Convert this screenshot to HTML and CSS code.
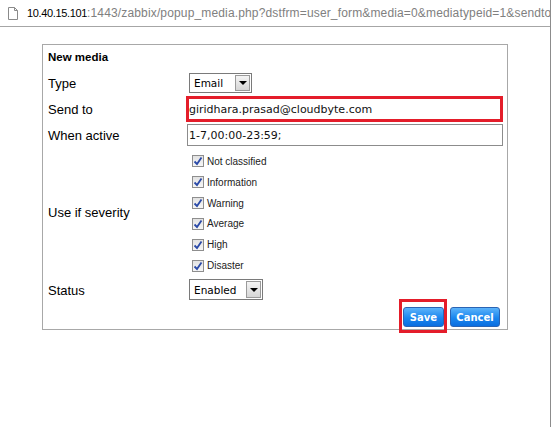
FILE: index.html
```html
<!DOCTYPE html>
<html>
<head>
<meta charset="utf-8">
<title>popup_media</title>
<link rel="stylesheet" href="styles.css">
</head>
<body>
<div class="window">
  <div class="addressbar">
    <svg class="page-icon" width="10" height="13" viewBox="0 0 10 13"><path d="M0.5 0.5 H6.5 L9.5 3.5 V12.5 H0.5 Z" fill="#fff" stroke="#8a8a8a"/><path d="M6.5 0.5 V3.5 H9.5" fill="none" stroke="#8a8a8a"/></svg>
    <span class="url"><span class="host">10.40.15.101</span><span class="path">:1443/zabbix/popup_media.php?dstfrm=user_form&amp;media=0&amp;mediatypeid=1&amp;sendto</span></span>
  </div>
  <div class="page">
    <div class="media-box">
      <div class="title">New media</div>
      <div class="form">
        <div class="label">Type</div>
        <div class="ctl">
          <div class="select select-type"><span class="sel-text">Email</span><span class="arrow"><span class="tri"></span></span></div>
        </div>

        <div class="label">Send to</div>
        <div class="ctl">
          <div class="input input-sendto">giridhara.prasad@cloudbyte.com</div>
        </div>

        <div class="label">When active</div>
        <div class="ctl">
          <div class="input input-period">1-7,00:00-23:59;</div>
        </div>

        <div class="label">Use if severity</div>
        <div class="ctl severities">
          <div class="sev"><span class="check"><svg width="10" height="10" viewBox="0 0 10 10"><path d="M1.5 5.5 L4 8 L8.5 1.5" fill="none" stroke="#2b4aa8" stroke-width="1.8"/></svg></span><span class="sev-label">Not classified</span></div>
          <div class="sev"><span class="check"><svg width="10" height="10" viewBox="0 0 10 10"><path d="M1.5 5.5 L4 8 L8.5 1.5" fill="none" stroke="#2b4aa8" stroke-width="1.8"/></svg></span><span class="sev-label">Information</span></div>
          <div class="sev"><span class="check"><svg width="10" height="10" viewBox="0 0 10 10"><path d="M1.5 5.5 L4 8 L8.5 1.5" fill="none" stroke="#2b4aa8" stroke-width="1.8"/></svg></span><span class="sev-label">Warning</span></div>
          <div class="sev"><span class="check"><svg width="10" height="10" viewBox="0 0 10 10"><path d="M1.5 5.5 L4 8 L8.5 1.5" fill="none" stroke="#2b4aa8" stroke-width="1.8"/></svg></span><span class="sev-label">Average</span></div>
          <div class="sev"><span class="check"><svg width="10" height="10" viewBox="0 0 10 10"><path d="M1.5 5.5 L4 8 L8.5 1.5" fill="none" stroke="#2b4aa8" stroke-width="1.8"/></svg></span><span class="sev-label">High</span></div>
          <div class="sev"><span class="check"><svg width="10" height="10" viewBox="0 0 10 10"><path d="M1.5 5.5 L4 8 L8.5 1.5" fill="none" stroke="#2b4aa8" stroke-width="1.8"/></svg></span><span class="sev-label">Disaster</span></div>
        </div>

        <div class="label">Status</div>
        <div class="ctl">
          <div class="select select-status"><span class="sel-text">Enabled</span><span class="arrow"><span class="tri"></span></span></div>
        </div>
      </div>
      <div class="buttons">
        <button class="btn btn-save" type="button">Save<span class="mark"></span></button>
        <button class="btn btn-cancel" type="button">Cancel</button>
      </div>
    </div>
  </div>
</div>
</body>
</html>
```

FILE: styles.css
```css
html, body {
  margin: 0;
  padding: 0;
  background: #fff;
}

body {
  font-family: "Liberation Sans", Arial, sans-serif;
  color: #000;
}

.window {
  width: 551px;
  height: 427px;
  box-sizing: border-box;
  border-right: 1px solid #8c8c8c;
  overflow: hidden;
}

.addressbar {
  height: 27px;
  box-sizing: border-box;
  border-bottom: 1px solid #a6a6a6;
  display: flex;
  align-items: center;
  padding-left: 8px;
  white-space: nowrap;
  overflow: hidden;
}

.page-icon {
  flex: none;
  margin-right: 9px;
  margin-top: 1px;
}

.url {
  font-size: 11px;
}

.host {
  color: #000;
  letter-spacing: -0.35px;
}

.path {
  color: #808080;
  font-size: 12px;
  letter-spacing: 0.15px;
}

.page {
  padding-top: 17px;
  padding-left: 42px;
}

.media-box {
  width: 466px;
  height: 286px;
  box-sizing: border-box;
  border: 1px solid #a8a8a8;
}

.title {
  height: 25px;
  line-height: 25px;
  padding-left: 5px;
  font-size: 11.5px;
  font-weight: bold;
}

.form {
  display: grid;
  grid-template-columns: 138px 1fr;
  grid-template-rows: 26px 26px 26px 128px 27px;
  padding-left: 5px;
}

.label {
  align-self: center;
  font-size: 13px;
  padding-top: 1px;
}

.ctl {
  display: flex;
  align-items: center;
}

.select {
  display: flex;
  align-items: stretch;
  box-sizing: border-box;
  border: 1px solid #7a7a7a;
  background: #fff;
  margin-left: 3px;
  font-family: "DejaVu Sans", Verdana, sans-serif;
  font-size: 10.5px;
}

.select-type {
  width: 63px;
  height: 20px;
}

.select-status {
  width: 74px;
  height: 21px;
}

.sel-text {
  flex: 1;
  display: flex;
  align-items: center;
  padding-left: 4px;
}

.arrow {
  width: 15px;
  margin: 1px;
  box-sizing: border-box;
  border: 1px solid #9a9a9a;
  background: linear-gradient(#f4f4f4, #d6d6d6);
  display: flex;
  align-items: center;
  justify-content: center;
}

.tri {
  width: 0;
  height: 0;
  border-left: 4px solid transparent;
  border-right: 4px solid transparent;
  border-top: 4px solid #000;
}

.input {
  box-sizing: border-box;
  background: #fff;
  font-family: "DejaVu Sans", Verdana, sans-serif;
  font-size: 11px;
  color: #111;
  display: flex;
  align-items: center;
  white-space: nowrap;
}

.input-sendto {
  width: 317px;
  height: 26px;
  border: 3px solid #e41d2a;
  padding-left: 0;
}

.input-period {
  width: 316px;
  height: 22px;
  margin-left: 1px;
  border: 1px solid #8c8c8c;
  padding-left: 1px;
}

.severities {
  flex-direction: column;
  align-items: flex-start;
  padding-top: 3px;
}

.sev {
  height: 21px;
  display: flex;
  align-items: center;
}

.check {
  width: 12px;
  height: 12px;
  box-sizing: border-box;
  margin-left: 6px;
  margin-right: 3px;
  border: 1px solid #8e8e8e;
  background: linear-gradient(#e2e2e2, #f6f6f6);
  display: flex;
  align-items: center;
  justify-content: center;
}

.check svg {
  display: block;
}

.sev-label {
  font-size: 10px;
  color: #222;
}

.buttons {
  display: flex;
  justify-content: flex-end;
  gap: 6px;
  padding-top: 4px;
  padding-right: 7px;
}

.btn {
  position: relative;
  height: 20px;
  box-sizing: border-box;
  padding: 0;
  border: 1px solid #2a64b4;
  border-radius: 3px;
  background: linear-gradient(#5cb3fa, #1a86ee 55%, #0a6ee0);
  color: #fff;
  font-family: "DejaVu Sans", Verdana, sans-serif;
  font-weight: bold;
  font-size: 10px;
  cursor: pointer;
}

.btn-save {
  width: 41px;
}

.btn-cancel {
  width: 50px;
}

.mark {
  position: absolute;
  top: -9px;
  left: -5px;
  right: -4px;
  bottom: -7px;
  border: 3px solid #e41d2a;
  pointer-events: none;
}
```
